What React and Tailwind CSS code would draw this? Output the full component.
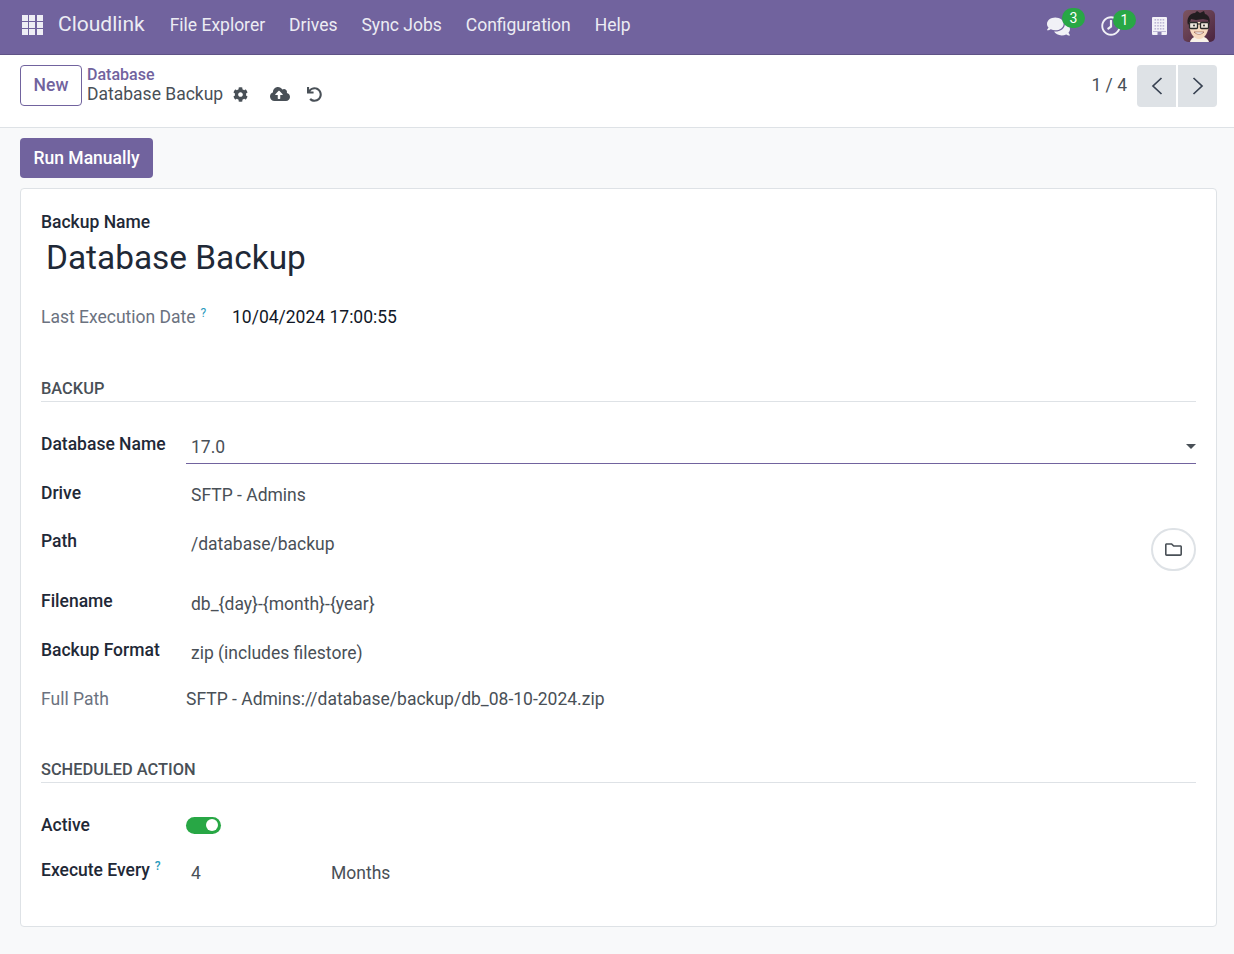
import { FaCog, FaCloudUploadAlt, FaUndo, FaComments, FaRegClock, FaRegFolder } from "react-icons/fa";

const MENU = ["File Explorer", "Drives", "Sync Jobs", "Configuration", "Help"];

function AppsIcon() {
  return (
    <div className="grid w-[21px] grid-cols-3 gap-px">
      {Array.from({ length: 9 }, (_, i) => (
        <span key={i} className="h-[6px] w-[6px] bg-[#eeeef5]" />
      ))}
    </div>
  );
}

function BuildingIcon() {
  return (
    <svg width="15" height="18" viewBox="0 0 15 18" className="mr-[16px]">
      <rect width="15" height="18" rx="1" fill="#f3f2f8" />
      {[2, 5, 8, 11].map((y) =>
        [2.5, 5.2, 7.9, 10.6].map((x) => <rect key={`${x}-${y}`} x={x} y={y} width="1.6" height="1.6" fill="#bdb7d6" />)
      )}
      <rect x="1" y="14" width="13" height="1" fill="#bdb7d6" />
      <rect x="5.5" y="15" width="4" height="3" fill="#857aae" />
    </svg>
  );
}

function Avatar() {
  return (
    <svg width="32" height="32" viewBox="0 0 32 32" className="rounded-[5px]">
      <defs>
        <linearGradient id="avatarBg" x1="0" y1="0" x2="1" y2="1">
          <stop offset="0" stopColor="#7d5560" />
          <stop offset="1" stopColor="#4a2440" />
        </linearGradient>
      </defs>
      <rect width="32" height="32" fill="url(#avatarBg)" />
      <path d="M7 32c1-4 5-6 9-6s9 2 10 6z" fill="#f7f1e8" />
      <path d="M6 12c0 10 4 17 10 17s10-7 10-17z" fill="#f6d9bf" />
      <path d="M5 15C3 8 7 3 12 3l2-2 3 2 4-2 1 3c4 1 6 6 4 11l-1-5-5-1-7 1-5-1-1 3z" fill="#221d20" />
      <rect x="6.5" y="12.5" width="8" height="6" rx="1" fill="#efe7dd" stroke="#2a2a2a" strokeWidth="1.3" />
      <rect x="17.5" y="12.5" width="8" height="6" rx="1" fill="#efe7dd" stroke="#2a2a2a" strokeWidth="1.3" />
      <path d="M14.5 14h3" stroke="#2a2a2a" strokeWidth="1.2" />
      <circle cx="11" cy="15.5" r="0.9" fill="#222" />
      <circle cx="21" cy="15.5" r="0.9" fill="#222" />
      <path d="M11 22c3 3 7 3 10 0z" fill="#fff" stroke="#8a4a3a" strokeWidth="0.6" />
    </svg>
  );
}

function Chevron({ d }) {
  return (
    <svg width="12" height="18" viewBox="0 0 12 18" fill="none" stroke="#374151" strokeWidth="1.7">
      <path d={d} />
    </svg>
  );
}

function Badge({ className, children }) {
  return (
    <span className={`absolute flex h-[20px] w-[23px] items-center justify-center rounded-full bg-[#28a745] text-[14px] leading-none text-white ${className}`}>
      {children}
    </span>
  );
}

function Help() {
  return <sup className="ml-[5px] text-[12px] text-[#2a9bbd]">?</sup>;
}

function Row({ label, muted, className, children }) {
  return (
    <div className={`flex ${className}`}>
      <div className={`w-[145px] shrink-0 text-[17.5px] leading-[24px] ${muted ? "text-[#6b7280]" : "font-medium text-[#1f2937]"}`}>
        {label}
      </div>
      <div className="min-w-0 flex-1 text-[17.5px] leading-[24px] text-[#495057]">{children}</div>
    </div>
  );
}

function SectionTitle({ children, className }) {
  return (
    <div className={`border-b border-[#dee2e6] pb-[1px] text-[16.4px] font-medium uppercase leading-[23px] text-[#495057] ${className}`}>
      {children}
    </div>
  );
}

export default function App() {
  return (
    <div className="h-[954px] overflow-hidden bg-[#f8f9fa] font-['Roboto',sans-serif] text-[#374151]">
      <nav className="flex h-[55px] items-center border-b border-[#5f5386] bg-[#71639e] pl-[22px] pr-[19px] text-white">
        <div className="mb-[4px]">
          <AppsIcon />
        </div>
        <span className="mb-[4px] ml-[15px] text-[21px] text-[#ececf3]">Cloudlink</span>
        <div className="mb-[4px] ml-[25px] flex gap-[24px] text-[17.5px] text-[#ececf3]">
          {MENU.map((m) => (
            <span key={m}>{m}</span>
          ))}
        </div>
        <div className="mb-[2px] ml-auto flex items-center">
          <span className="relative mr-[31px] block">
            <FaComments size={23} className="text-[#f1f1f6]" />
            <Badge className="left-[15px] top-[-7px]">3</Badge>
          </span>
          <span className="relative mr-[31px] block">
            <FaRegClock size={20} className="-scale-x-100 text-[#f1f1f6]" />
            <Badge className="left-[12px] top-[-6px]">1</Badge>
          </span>
          <BuildingIcon />
          <Avatar />
        </div>
      </nav>

      <div className="flex h-[73px] border-b border-[#dee2e6] bg-white pl-[20px] pr-[17px] pt-[10px]">
        <button className="h-[41px] w-[62px] rounded-[4px] border border-[#71639e] text-[17.5px] font-medium text-[#71639e]">
          New
        </button>
        <div className="ml-[5px]">
          <div className="text-[16px] font-medium leading-[20px] text-[#71639e]">Database</div>
          <div className="mt-[-1px] flex items-center text-[17.5px] leading-[20px] text-[#495057]">
            <span>Database Backup</span>
            <FaCog size={15} className="ml-[10px]" />
            <FaCloudUploadAlt size={20} className="ml-[22px]" />
            <FaUndo size={15} className="ml-[17px]" />
          </div>
        </div>
        <div className="ml-auto flex h-[42px] items-center">
          <span className="mb-[2px] mr-[10px] text-[17.5px] text-[#495057]">1 / 4</span>
          <button className="flex h-[42px] w-[39px] items-center justify-center rounded-l-[4px] bg-[#dee2e6]">
            <Chevron d="M10.5 1 L2 9 L10.5 17" />
          </button>
          <button className="ml-[2px] flex h-[42px] w-[39px] items-center justify-center rounded-r-[4px] bg-[#dee2e6]">
            <Chevron d="M1.5 1 L10 9 L1.5 17" />
          </button>
        </div>
      </div>

      <div className="pl-[20px] pr-[17px] pt-[10px]">
        <button className="h-[40px] w-[133px] rounded-[4px] bg-[#71639e] text-[17.5px] font-medium text-white">
          Run Manually
        </button>

        <div className="mt-[10px] h-[739px] rounded-[4px] border border-[#dee2e6] bg-white px-[20px] pt-[21px]">
          <div className="text-[17.5px] font-medium leading-[24px] text-[#1f2937]">Backup Name</div>
          <div className="mt-[1px] pl-[5px] text-[33.4px] leading-[45px] text-[#1f2937]">Database Backup</div>

          <div className="mt-[25px] flex text-[17.5px] leading-[24px]">
            <div className="w-[191px] text-[#6b7280]">
              Last Execution Date
              <Help />
            </div>
            <div className="text-[#111827]">10/04/2024 17:00:55</div>
          </div>

          <SectionTitle className="mt-[48px]">Backup</SectionTitle>

          <Row label="Database Name" className="mt-[30px]">
            <div className="flex h-[32px] items-start justify-between border-b border-[#71639e] pl-[5px] pt-[3px]">
              <span>17.0</span>
              <span className="mt-[9px] h-0 w-0 border-x-[5px] border-t-[5px] border-x-transparent border-t-[#495057]" />
            </div>
          </Row>
          <Row label="Drive" className="mt-[17px]">
            <div className="pl-[5px] pt-[2px]">SFTP - Admins</div>
          </Row>
          <Row label="Path" className="mt-[22px] h-[37px]">
            <div className="flex items-start justify-between pl-[5px] pt-[3px]">
              <span>/database/backup</span>
              <button className="mt-[-4px] flex h-[43px] w-[45px] items-center justify-center rounded-full border-2 border-[#dee2e6] bg-white text-[#495057]">
                <FaRegFolder size={17} />
              </button>
            </div>
          </Row>
          <Row label="Filename" className="mt-[23px]">
            <div className="pl-[5px] pt-[3px]">db_{"{day}"}-{"{month}"}-{"{year}"}</div>
          </Row>
          <Row label="Backup Format" className="mt-[22px]">
            <div className="pl-[5px] pt-[3px]">zip (includes filestore)</div>
          </Row>
          <Row label="Full Path" muted className="mt-[22px]">
            <div>SFTP - Admins://database/backup/db_08-10-2024.zip</div>
          </Row>

          <SectionTitle className="mt-[47px]">Scheduled Action</SectionTitle>

          <Row label="Active" className="mt-[30px]">
            <div className="flex h-[24px] items-center">
              <span className="flex h-[17px] w-[35px] items-center justify-end rounded-full bg-[#28a745] pr-[3px]">
                <span className="h-[12px] w-[12px] rounded-full bg-white" />
              </span>
            </div>
          </Row>
          <Row label={<>Execute Every<Help /></>} className="mt-[21px]">
            <div className="flex pl-[5px] pt-[3px]">
              <span className="w-[140px]">4</span>
              <span>Months</span>
            </div>
          </Row>
        </div>
      </div>
    </div>
  );
}
